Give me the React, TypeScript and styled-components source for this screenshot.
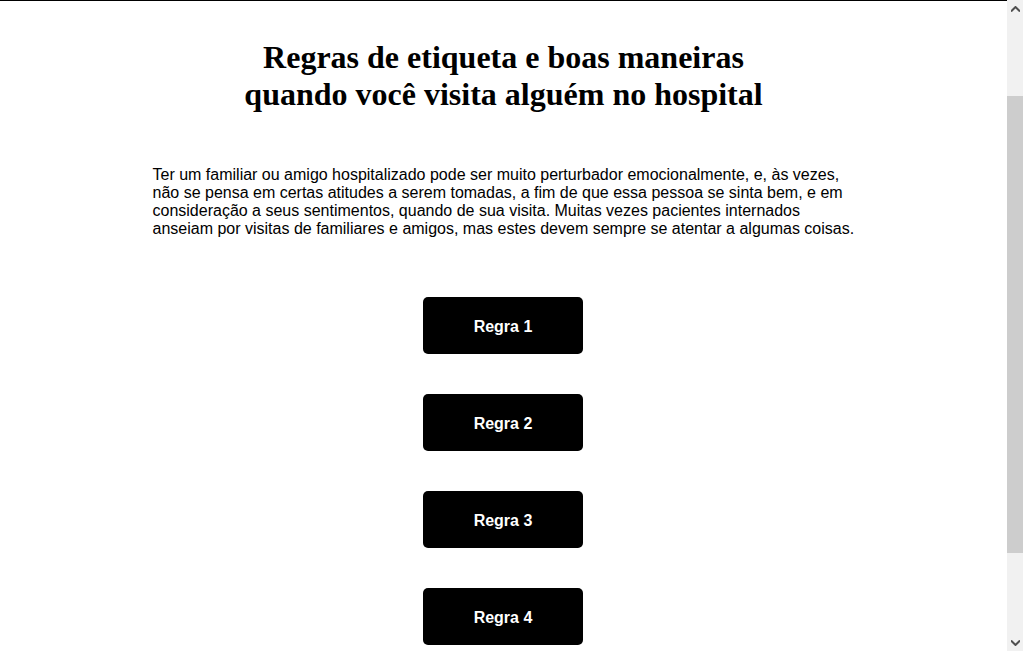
import React from "react";
import styled, { createGlobalStyle } from "styled-components";

const GlobalStyle = createGlobalStyle`
  body {
    margin: 0;
    background: #fff;
    color: #000;
  }
`;

const rules = ["Regra 1", "Regra 2", "Regra 3", "Regra 4"];

// the reference shows the classic browser scrollbar, drawn here as a fixed strip
const Scrollbar = () => (
  <ScrollTrack>
    <Arrow>
      <svg width="9" height="6" viewBox="0 0 9 6">
        <path d="M0 5.5 L4.5 1 L9 5.5" fill="none" stroke="#505050" strokeWidth="2" />
      </svg>
    </Arrow>
    <ThumbArea>
      <Thumb />
    </ThumbArea>
    <Arrow>
      <svg width="9" height="6" viewBox="0 0 9 6">
        <path d="M0 0.5 L4.5 5 L9 0.5" fill="none" stroke="#505050" strokeWidth="2" />
      </svg>
    </Arrow>
  </ScrollTrack>
);

const App = () => {
  return (
    <>
      <GlobalStyle />
      <Page>
        <Title>
          Regras de etiqueta e boas maneiras
          <br />
          quando você visita alguém no hospital
        </Title>
        <Intro>
          Ter um familiar ou amigo hospitalizado pode ser muito perturbador
          emocionalmente, e, às vezes, não se pensa em certas atitudes a serem
          tomadas, a fim de que essa pessoa se sinta bem, e em consideração a
          seus sentimentos, quando de sua visita. Muitas vezes pacientes
          internados anseiam por visitas de familiares e amigos, mas estes
          devem sempre se atentar a algumas coisas.
        </Intro>
        <RuleList>
          {rules.map((r) => (
            <RuleButton key={r}>{r}</RuleButton>
          ))}
        </RuleList>
      </Page>
      <Scrollbar />
    </>
  );
};

export default App;

const Page = styled.div`
  margin-right: 16px;
  border-top: 1px solid #000;
  display: flex;
  flex-direction: column;
  align-items: center;
  padding-bottom: 48px;
`;

const Title = styled.h1`
  font-family: "Liberation Serif", "Times New Roman", serif;
  font-weight: bold;
  font-size: 32px;
  line-height: 37px;
  text-align: center;
  margin: 38px 0 0;
`;

const Intro = styled.p`
  width: 702px;
  font-family: "Liberation Sans", Arial, sans-serif;
  font-size: 16px;
  line-height: normal;
  margin: 53px 0 0;
`;

const RuleList = styled.div`
  display: flex;
  flex-direction: column;
  gap: 40px;
  margin-top: 59px;
  margin-right: 1px;
`;

const RuleButton = styled.button`
  width: 160px;
  height: 57px;
  padding: 3px 0 0;
  border: none;
  border-radius: 5px;
  background: #000;
  color: #fff;
  font-family: "Liberation Sans", Arial, sans-serif;
  font-weight: bold;
  font-size: 16px;
  cursor: pointer;
`;

const ScrollTrack = styled.div`
  position: fixed;
  top: 0;
  right: 0;
  bottom: 0;
  width: 16px;
  background: #f1f1f1;
  display: flex;
  flex-direction: column;
`;

const Arrow = styled.div`
  height: 17px;
  display: flex;
  align-items: center;
  justify-content: center;
`;

const ThumbArea = styled.div`
  flex: 1;
  padding-top: 79px;
  padding-bottom: 81px;
  display: flex;
`;

const Thumb = styled.div`
  flex: 1;
  background: #cdcdcd;
`;
